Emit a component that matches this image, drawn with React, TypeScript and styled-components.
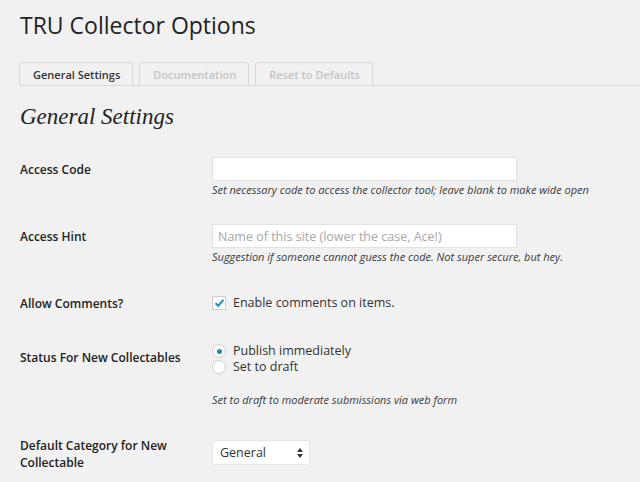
import { createGlobalStyle } from 'styled-components'
import styled from 'styled-components'

const GlobalStyle = createGlobalStyle`
	html, body {
		margin: 0;
		padding: 0;
		background: #f1f1f1;
	}
	body {
		font-family: 'Open Sans', 'Liberation Sans', sans-serif;
		color: #222222;
		width: 640px;
		height: 482px;
		overflow: hidden;
	}
`

const Wrap = styled.div`
	padding: 10px 0 0 20px;
`

const PageTitle = styled.h1`
	font-weight: 400;
	font-size: 23px;
	line-height: 30px;
	margin: 0 0 22px 0;
	color: #222222;
`

const TabBar = styled.div`
	display: flex;
	gap: 6px;
	margin-left: -1px;
	border-bottom: 1px solid #d8d8d8;
	height: 23px;
`

const Tab = styled.div<{ $active?: boolean }>`
	display: flex;
	align-items: center;
	padding: 0 12px 0 13px;
	height: 22px;
	border: 1px solid #d8d8d8;
	border-bottom: none;
	border-radius: 3px 3px 0 0;
	font-size: 11px;
	font-weight: 600;
	color: ${(p) => (p.$active ? '#333333' : '#c4c4c4')};
	background: #f1f1f1;
`

const SectionTitle = styled.h2`
	font-family: 'Liberation Serif', serif;
	font-style: italic;
	font-weight: 400;
	font-size: 23px;
	line-height: 28px;
	margin: 17px 0 12px 0;
	color: #222222;
`

const Table = styled.div`
	display: grid;
	grid-template-columns: 192px 1fr;
`

const Label = styled.div<{ $pt: number }>`
	font-size: 12px;
	font-weight: 600;
	line-height: 17px;
	color: #222222;
	padding-top: ${(p) => p.$pt}px;
`

const Field = styled.div<{ $pt: number; $pb: number }>`
	padding-top: ${(p) => p.$pt}px;
	padding-bottom: ${(p) => p.$pb}px;
`

const TextInput = styled.input`
	box-sizing: border-box;
	width: 305px;
	height: 24px;
	margin: 0;
	border: 1px solid #e2e2e2;
	background: #ffffff;
	font-family: 'Open Sans', 'Liberation Sans', sans-serif;
	font-size: 12.5px;
	padding: 0 5px;
	display: block;

	&::placeholder {
		color: #a8a8a8;
	}
`

const Description = styled.p<{ $mt?: number }>`
	margin: ${(p) => p.$mt ?? 1}px 0 0 0;
	font-size: 11px;
	font-style: italic;
	line-height: 16px;
	color: #3a3a3a;
`

const OptionRow = styled.label`
	display: flex;
	align-items: center;
	gap: 7px;
	font-size: 12.5px;
	line-height: 16px;
	color: #333333;
`

const Check = styled.span`
	box-sizing: border-box;
	width: 14px;
	height: 14px;
	border: 1px solid #cfcfcf;
	background: #ffffff;
	display: flex;
	align-items: center;
	justify-content: center;
`

const Radio = styled.span<{ $checked?: boolean }>`
	box-sizing: border-box;
	width: 14px;
	height: 14px;
	border-radius: 50%;
	border: 1px solid #cfcfcf;
	background: #ffffff;
	display: flex;
	align-items: center;
	justify-content: center;

	&::after {
		content: '';
		width: 5px;
		height: 5px;
		border-radius: 50%;
		background: ${(p) => (p.$checked ? '#1e8cbe' : 'transparent')};
	}
`

const Select = styled.div`
	box-sizing: border-box;
	width: 98px;
	height: 25px;
	border: 1px solid #e6e6e6;
	border-radius: 3px;
	background: #ffffff;
	display: flex;
	align-items: center;
	justify-content: space-between;
	padding: 0 6px 0 7px;
	font-size: 12.5px;
	color: #333333;
`

const tabs = [
	{ title: 'General Settings', active: true },
	{ title: 'Documentation' },
	{ title: 'Reset to Defaults' },
]

export default function App() {
	return (
		<>
			<GlobalStyle />
			<Wrap>
				<PageTitle>TRU Collector Options</PageTitle>
				<TabBar>
					{tabs.map((t) => (
						<Tab key={t.title} $active={t.active}>
							{t.title}
						</Tab>
					))}
				</TabBar>
				<SectionTitle>General Settings</SectionTitle>
				<Table>
					<Label $pt={18}>Access Code</Label>
					<Field $pt={14} $pb={26}>
						<TextInput type="text" />
						<Description>
							Set necessary code to access the collector tool; leave blank to make wide open
						</Description>
					</Field>

					<Label $pt={4}>Access Hint</Label>
					<Field $pt={0} $pb={28}>
						<TextInput type="text" placeholder="Name of this site (lower the case, Ace!)" />
						<Description>Suggestion if someone cannot guess the code. Not super secure, but hey.</Description>
					</Field>

					<Label $pt={2}>Allow Comments?</Label>
					<Field $pt={2} $pb={32}>
						<OptionRow>
							<Check>
								<svg width="11" height="10" viewBox="0 0 11 10">
									<path d="M1.5 5.2 L4.2 7.8 L9.5 1.8" fill="none" stroke="#1e8cbe" strokeWidth="2" />
								</svg>
							</Check>
							Enable comments on items.
						</OptionRow>
					</Field>

					<Label $pt={6}>Status For New Collectables</Label>
					<Field $pt={0} $pb={29}>
						<OptionRow>
							<Radio $checked />
							Publish immediately
						</OptionRow>
						<OptionRow>
							<Radio />
							Set to draft
						</OptionRow>
						<Description $mt={17}>Set to draft to moderate submissions via web form</Description>
					</Field>

					<Label $pt={0}>Default Category for New Collectable</Label>
					<Field $pt={3} $pb={20}>
						<Select>
							General
							<svg width="6" height="10" viewBox="0 0 6 10">
								<path d="M0 4 L3 0 L6 4 Z M0 6 L3 10 L6 6 Z" fill="#333333" />
							</svg>
						</Select>
					</Field>
				</Table>
			</Wrap>
		</>
	)
}
